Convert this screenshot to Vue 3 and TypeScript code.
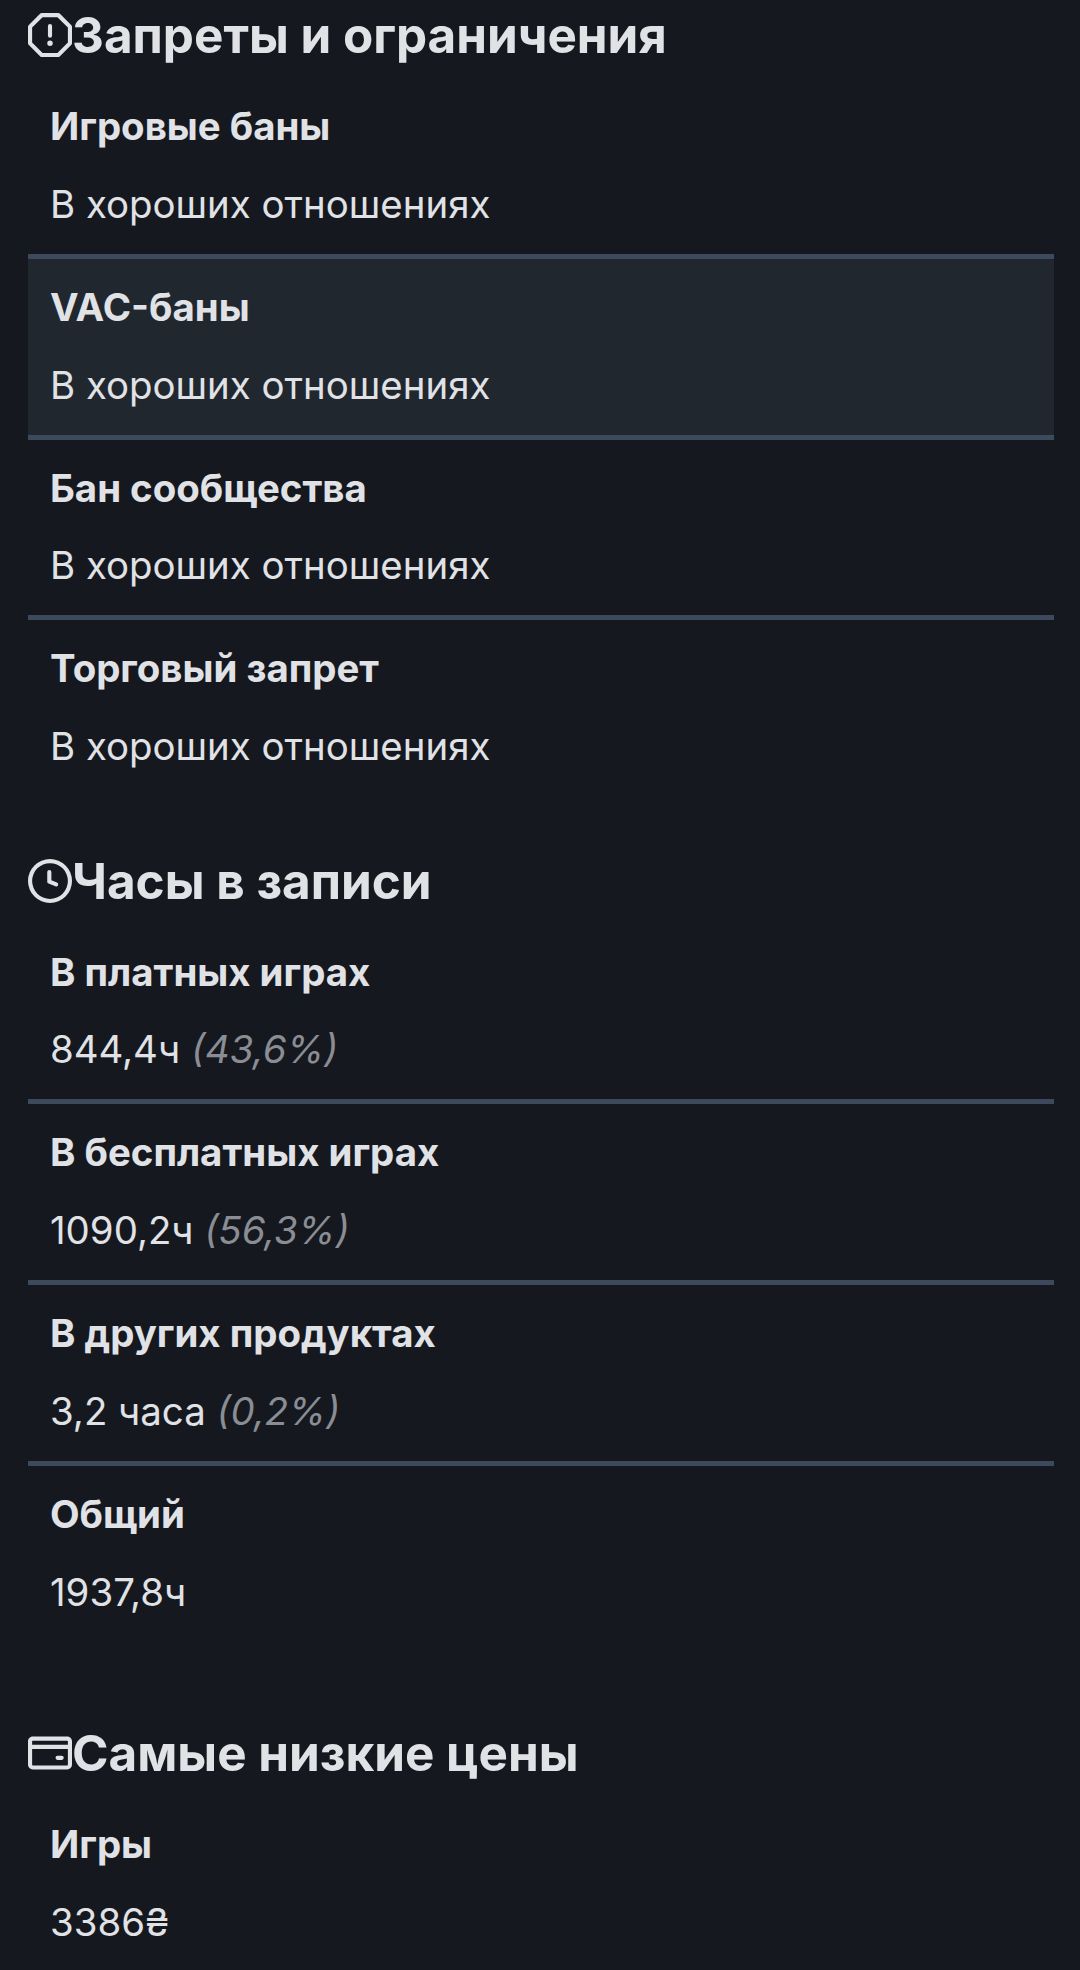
<script setup lang="ts">
interface Row {
  label: string
  value: string
  note?: string
  hovered?: boolean
}

interface Section {
  title: string
  icon: string
  rows: Row[]
}

const stopIcon =
  'M4.47.22A.749.749 0 0 1 5 0h6c.199 0 .389.079.53.22l4.25 4.25c.141.14.22.331.22.53v6a.749.749 0 0 1-.22.53l-4.25 4.25A.749.749 0 0 1 11 16H5a.749.749 0 0 1-.53-.22L.22 11.53A.749.749 0 0 1 0 11V5c0-.199.079-.389.22-.53Zm.84 1.28L1.5 5.31v5.38l3.81 3.81h5.38l3.81-3.81V5.31L10.69 1.5ZM8 4a.75.75 0 0 1 .75.75v3.5a.75.75 0 0 1-1.5 0v-3.5A.75.75 0 0 1 8 4Zm0 8a1 1 0 1 1 0-2 1 1 0 0 1 0 2Z'
const clockIcon =
  'M8 0a8 8 0 1 1 0 16A8 8 0 0 1 8 0ZM1.5 8a6.5 6.5 0 1 0 13 0 6.5 6.5 0 0 0-13 0Zm7-3.25v2.992l2.028.812a.75.75 0 0 1-.557 1.392l-2.5-1A.751.751 0 0 1 7 8.25v-3.5a.75.75 0 0 1 1.5 0Z'
const cardIcon =
  'M10.75 9a.75.75 0 0 0 0 1.5h1.5a.75.75 0 0 0 0-1.5h-1.5ZM0 3.75C0 2.784.784 2 1.75 2h12.5c.966 0 1.75.784 1.75 1.75v8.5A1.75 1.75 0 0 1 14.25 14H1.75A1.75 1.75 0 0 1 0 12.25ZM14.5 6.5h-13v5.75c0 .138.112.25.25.25h12.5a.25.25 0 0 0 .25-.25Zm0-2.75a.25.25 0 0 0-.25-.25H1.75a.25.25 0 0 0-.25.25V5h13Z'

const good = 'В хороших отношениях'

const sections: Section[] = [
  {
    title: 'Запреты и ограничения',
    icon: stopIcon,
    rows: [
      { label: 'Игровые баны', value: good },
      { label: 'VAC-баны', value: good, hovered: true },
      { label: 'Бан сообщества', value: good },
      { label: 'Торговый запрет', value: good },
    ],
  },
  {
    title: 'Часы в записи',
    icon: clockIcon,
    rows: [
      { label: 'В платных играх', value: '844,4ч', note: '(43,6%)' },
      { label: 'В бесплатных играх', value: '1090,2ч', note: '(56,3%)' },
      { label: 'В других продуктах', value: '3,2 часа', note: '(0,2%)' },
      { label: 'Общий', value: '1937,8ч' },
    ],
  },
  {
    title: 'Самые низкие цены',
    icon: cardIcon,
    rows: [{ label: 'Игры', value: '3386₴' }],
  },
]
</script>

<template>
  <div class="page">
    <section v-for="section in sections" :key="section.title" class="section">
      <h2 class="section-title">
        <svg class="section-icon" viewBox="0 0 16 16" fill="currentColor">
          <path :d="section.icon" />
        </svg>
        {{ section.title }}
      </h2>
      <div class="rows">
        <div
          v-for="row in section.rows"
          :key="row.label"
          class="row"
          :class="{ 'row-hovered': row.hovered }"
        >
          <div class="row-label">{{ row.label }}</div>
          <div class="row-value">
            {{ row.value }}
            <em v-if="row.note" class="row-note">{{ row.note }}</em>
          </div>
        </div>
      </div>
    </section>
  </div>
</template>

<style>
html,
body {
  background: #15181f;
}
</style>

<style scoped>
.page {
  height: 1970px;
  overflow: hidden;
  box-sizing: border-box;
  padding: 0 26px 0 28px;
  background: #15181f;
  color: #e0e2e6;
  font-family: Inter, "Noto Sans", sans-serif;
}

.section {
  margin-bottom: 49.5px;
}

.section:nth-child(2) {
  margin-bottom: 76.5px;
}

.section-title {
  display: flex;
  align-items: center;
  height: 70px;
  margin: 0 0 8px;
  font-size: 49.4px;
  font-weight: 700;
  line-height: 70px;
}

.section-icon {
  flex: none;
  width: 44px;
  height: 44px;
}

.row {
  padding: 20.2px 22px;
  border-top: 5px solid #3d4a5e;
}

.row:first-child {
  border-top: none;
}

.row-hovered {
  background: #20272f;
}

.row-label {
  font-size: 38.4px;
  font-weight: 700;
  line-height: 57.6px;
}

.row-value {
  margin-top: 20.2px;
  font-size: 38.4px;
  line-height: 57.6px;
}

.row-note {
  color: #8a8d93;
}
</style>
